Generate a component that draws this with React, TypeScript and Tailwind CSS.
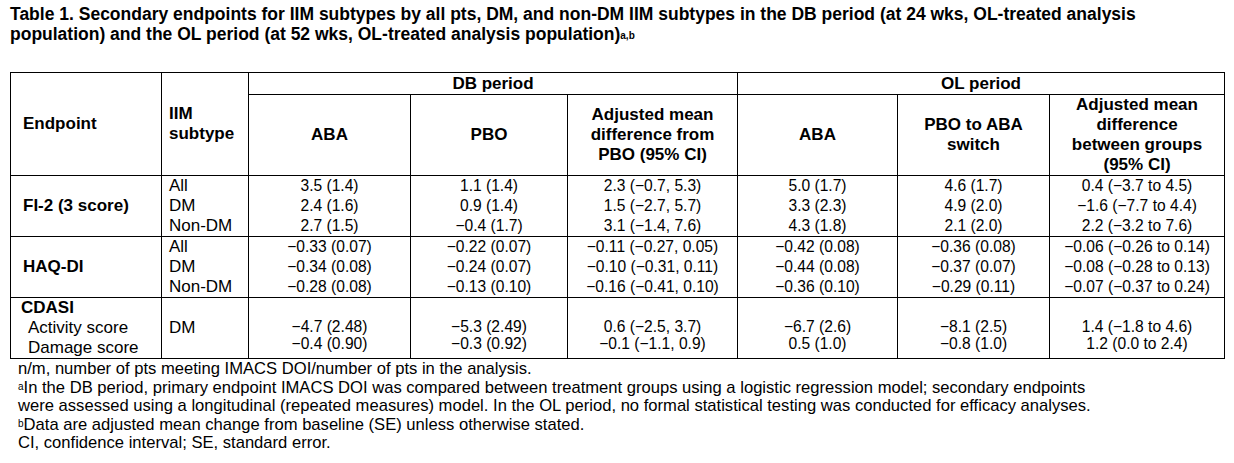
import React from "react";

const M = "\u2212";

type Group = {
  label: string;
  subtypes: string[];
  cols: string[][];
};

const groups: Group[] = [
  {
    label: "FI-2 (3 score)",
    subtypes: ["All", "DM", "Non-DM"],
    cols: [
      ["3.5 (1.4)", "2.4 (1.6)", "2.7 (1.5)"],
      ["1.1 (1.4)", "0.9 (1.4)", `${M}0.4 (1.7)`],
      [`2.3 (${M}0.7, 5.3)`, `1.5 (${M}2.7, 5.7)`, `3.1 (${M}1.4, 7.6)`],
      ["5.0 (1.7)", "3.3 (2.3)", "4.3 (1.8)"],
      ["4.6 (1.7)", "4.9 (2.0)", "2.1 (2.0)"],
      [`0.4 (${M}3.7 to 4.5)`, `${M}1.6 (${M}7.7 to 4.4)`, `2.2 (${M}3.2 to 7.6)`],
    ],
  },
  {
    label: "HAQ-DI",
    subtypes: ["All", "DM", "Non-DM"],
    cols: [
      [`${M}0.33 (0.07)`, `${M}0.34 (0.08)`, `${M}0.28 (0.08)`],
      [`${M}0.22 (0.07)`, `${M}0.24 (0.07)`, `${M}0.13 (0.10)`],
      [`${M}0.11 (${M}0.27, 0.05)`, `${M}0.10 (${M}0.31, 0.11)`, `${M}0.16 (${M}0.41, 0.10)`],
      [`${M}0.42 (0.08)`, `${M}0.44 (0.08)`, `${M}0.36 (0.10)`],
      [`${M}0.36 (0.08)`, `${M}0.37 (0.07)`, `${M}0.29 (0.11)`],
      [`${M}0.06 (${M}0.26 to 0.14)`, `${M}0.08 (${M}0.28 to 0.13)`, `${M}0.07 (${M}0.37 to 0.24)`],
    ],
  },
];

const cdasi = [
  [`${M}4.7 (2.48)`, `${M}0.4 (0.90)`],
  [`${M}5.3 (2.49)`, `${M}0.3 (0.92)`],
  [`0.6 (${M}2.5, 3.7)`, `${M}0.1 (${M}1.1, 0.9)`],
  [`${M}6.7 (2.6)`, "0.5 (1.0)"],
  [`${M}8.1 (2.5)`, `${M}0.8 (1.0)`],
  [`1.4 (${M}1.8 to 4.6)`, "1.2 (0.0 to 2.4)"],
];

const cell = "border border-black";

export default function App() {
  return (
    <div
      className="w-[1234px] h-[463px] bg-white text-black overflow-hidden pt-[4px]"
      style={{ fontFamily: '"Liberation Sans", Arial, sans-serif' }}
    >
      {/* Title */}
      <p className="pl-[10px] text-[17.5px] leading-5 font-bold">
        Table 1. Secondary endpoints for IIM subtypes by all pts, DM, and non-DM IIM subtypes in the DB period (at 24 wks, OL-treated analysis
        <br />
        population) and the OL period (at 52 wks, OL-treated analysis population)
        <span className="text-[10px] font-bold align-[1px]">a,b</span>
      </p>

      {/* Table */}
      <table className="mt-[26px] ml-[10px] w-[1214px] table-fixed border-collapse text-[15.6px] leading-5">
        <colgroup>
          <col className="w-[151px]" />
          <col className="w-[87px]" />
          <col className="w-[162px]" />
          <col className="w-[157px]" />
          <col className="w-[170px]" />
          <col className="w-[160px]" />
          <col className="w-[152px]" />
          <col className="w-[175px]" />
        </colgroup>
        <thead className="text-[17px]">
          <tr className="h-[22px]">
            <th rowSpan={2} className={`${cell} text-left pl-[12px] font-bold`}>
              Endpoint
            </th>
            <th rowSpan={2} className={`${cell} text-left pl-[7px] font-bold`}>
              IIM
              <br />
              subtype
            </th>
            <th colSpan={3} className={`${cell} text-center font-bold`}>
              DB period
            </th>
            <th colSpan={3} className={`${cell} text-center font-bold`}>
              OL period
            </th>
          </tr>
          <tr className="h-[79px]">
            <th className={`${cell} font-bold`}>ABA</th>
            <th className={`${cell} font-bold`}>PBO</th>
            <th className={`${cell} font-bold`}>
              Adjusted mean
              <br />
              difference from
              <br />
              PBO (95% CI)
            </th>
            <th className={`${cell} font-bold`}>ABA</th>
            <th className={`${cell} font-bold`}>
              PBO to ABA
              <br />
              switch
            </th>
            <th className={`${cell} font-bold`}>
              Adjusted mean
              <br />
              difference
              <br />
              between groups
              <br />
              (95% CI)
            </th>
          </tr>
        </thead>
        <tbody>
          {groups.map((g) => (
            <tr key={g.label} className="h-[60px]">
              <td className={`${cell} pl-[12px] text-[17px] font-bold align-middle`}>{g.label}</td>
              <td className={`${cell} pl-[7px] text-[17px] align-top`}>
                {g.subtypes.map((s) => (
                  <div key={s}>{s}</div>
                ))}
              </td>
              {g.cols.map((c, i) => (
                <td key={i} className={`${cell} text-center align-top`}>
                  {c.map((v) => (
                    <div key={v}>{v}</div>
                  ))}
                </td>
              ))}
            </tr>
          ))}
          <tr className="h-[61px]">
            <td className={`${cell} align-top text-[17px]`}>
              <div className="pl-[10px] font-bold">CDASI</div>
              <div className="pl-[17px]">Activity score</div>
              <div className="pl-[17px]">Damage score</div>
            </td>
            <td className={`${cell} pl-[7px] text-[17px] align-middle`}>DM</td>
            {cdasi.map((c, i) => (
              <td key={i} className={`${cell} text-center align-top pt-[20px] leading-[17px]`}>
                {c.map((v) => (
                  <div key={v}>{v}</div>
                ))}
              </td>
            ))}
          </tr>
        </tbody>
      </table>

      {/* Footnotes */}
      <div className="mt-[1px] pl-[18px] text-[16.6px] leading-[18px]">
        <p>n/m, number of pts meeting IMACS DOI/number of pts in the analysis.</p>
        <p>
          <span className="text-[10px] align-[3px]">a</span>In the DB period, primary endpoint IMACS DOI was compared between treatment groups using a logistic regression model; secondary endpoints
          <br />
          were assessed using a longitudinal (repeated measures) model. In the OL period, no formal statistical testing was conducted for efficacy analyses.
        </p>
        <p>
          <span className="text-[10px] align-[3px]">b</span>Data are adjusted mean change from baseline (SE) unless otherwise stated.
        </p>
        <p>CI, confidence interval; SE, standard error.</p>
      </div>
    </div>
  );
}
